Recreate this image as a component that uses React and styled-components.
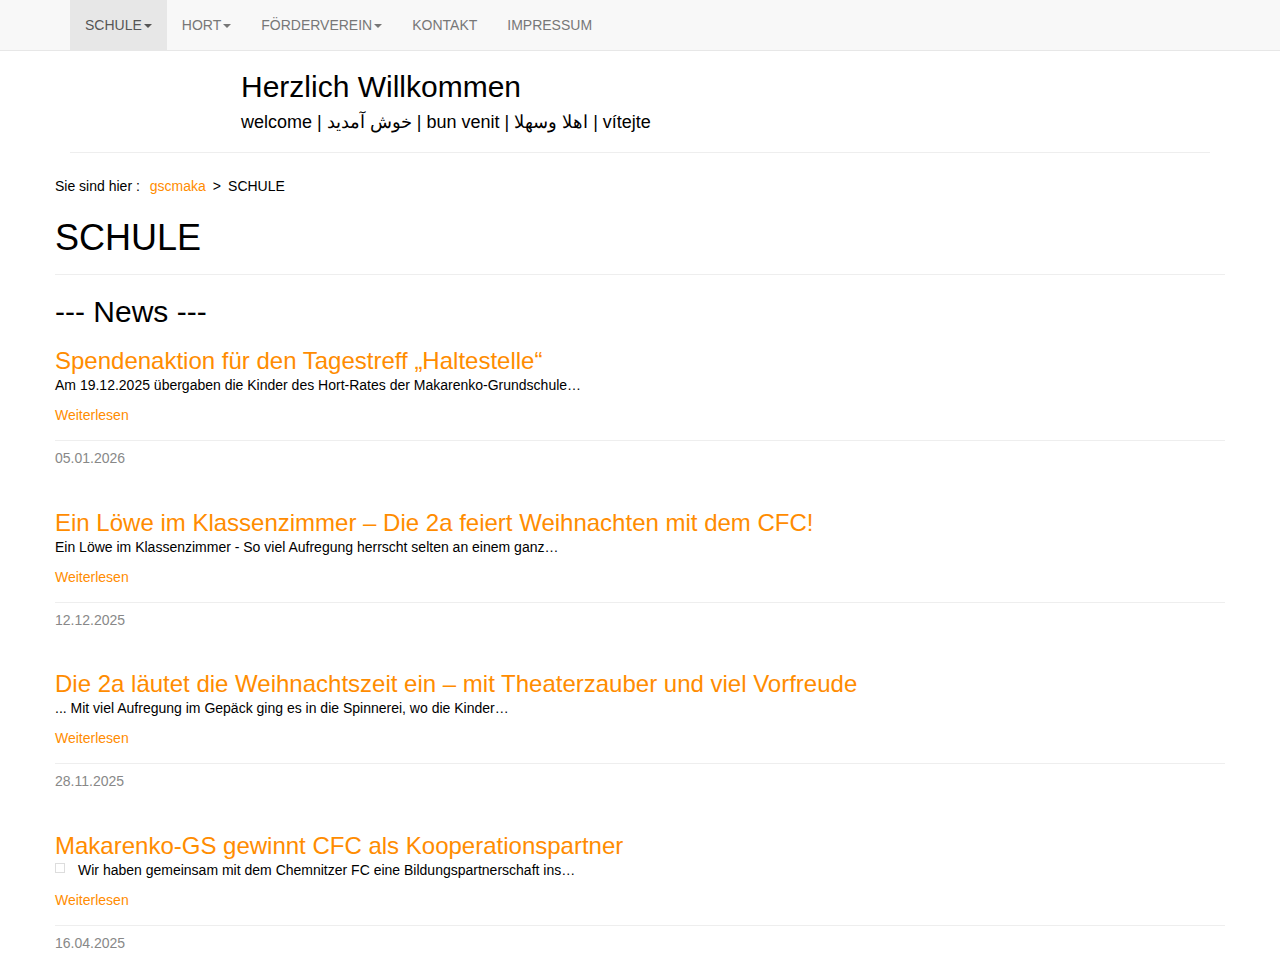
import React from "react";
import styled, { createGlobalStyle } from "styled-components";

const GlobalStyle = createGlobalStyle`
    body {
        margin: 0;
        font-family: "Liberation Sans", Arial, sans-serif;
        font-size: 14px;
        line-height: 20px;
        color: #111;
        background: #fff;
    }
`;

const navItems = [
    { label: "SCHULE", caret: true, active: true },
    { label: "HORT", caret: true },
    { label: "FÖRDERVEREIN", caret: true },
    { label: "KONTAKT" },
    { label: "IMPRESSUM" },
];

const news = [
    {
        title: "Spendenaktion für den Tagestreff „Haltestelle“",
        teaser: "Am 19.12.2025 übergaben die Kinder des Hort-Rates der Makarenko-Grundschule…",
        date: "05.01.2026",
    },
    {
        title: "Ein Löwe im Klassenzimmer – Die 2a feiert Weihnachten mit dem CFC!",
        teaser: "Ein Löwe im Klassenzimmer - So viel Aufregung herrscht selten an einem ganz…",
        date: "12.12.2025",
    },
    {
        title: "Die 2a läutet die Weihnachtszeit ein – mit Theaterzauber und viel Vorfreude",
        teaser: "... Mit viel Aufregung im Gepäck ging es in die Spinnerei, wo die Kinder…",
        date: "28.11.2025",
    },
    {
        title: "Makarenko-GS gewinnt CFC als Kooperationspartner",
        teaser: "Wir haben gemeinsam mit dem Chemnitzer FC eine Bildungspartnerschaft ins…",
        date: "16.04.2025",
        brokenImage: true,
    },
];

export default function App() {
    return (
        <>
            <GlobalStyle />
            <Navbar>
                <NavContainer>
                    <NavList>
                        {navItems.map((item) => (
                            <NavItem key={item.label} $active={item.active}>
                                {item.label}
                                {item.caret && <Caret />}
                            </NavItem>
                        ))}
                    </NavList>
                </NavContainer>
            </Navbar>

            <Container>
                <Header>
                    <Welcome>Herzlich Willkommen</Welcome>
                    <Languages>
                        welcome | <bdi dir="rtl">خوش آمدید</bdi> | bun venit | <bdi dir="rtl">اهلا وسهلا</bdi> | vítejte
                    </Languages>
                </Header>
            </Container>

            <Main>
                <Breadcrumb>
                    <span>Sie sind hier :</span>
                    <Link>gscmaka</Link>
                    <span>&gt;</span>
                    <span>SCHULE</span>
                </Breadcrumb>
                <PageTitle>SCHULE</PageTitle>
                <Rule />
                <SectionTitle>--- News ---</SectionTitle>

                {news.map((n) => (
                    <Article key={n.title}>
                        <ArticleTitle>{n.title}</ArticleTitle>
                        <Teaser>
                            {n.brokenImage && <BrokenImg />}
                            {n.teaser}
                        </Teaser>
                        <ReadMore>Weiterlesen</ReadMore>
                        <ArticleRule />
                        <DateLine>{n.date}</DateLine>
                    </Article>
                ))}
            </Main>
        </>
    );
}

const Navbar = styled.nav`
    background: #f8f8f8;
    border-bottom: 1px solid #e7e7e7;
    height: 50px;
`;

const NavContainer = styled.div`
    width: 1140px;
    margin: 0 auto;
    padding: 0 15px;
`;

const NavList = styled.ul`
    display: flex;
    margin: 0;
    padding: 0;
    list-style: none;
`;

const NavItem = styled.li`
    display: flex;
    align-items: center;
    height: 50px;
    padding: 0 15px;
    font-size: 14px;
    color: ${(p) => (p.$active ? "#555" : "#777")};
    background: ${(p) => (p.$active ? "#e7e7e7" : "transparent")};
`;

const Caret = styled.span`
    display: inline-block;
    width: 0;
    height: 0;
    margin-left: 2px;
    margin-top: 1px;
    border-top: 4px solid currentColor;
    border-left: 4px solid transparent;
    border-right: 4px solid transparent;
`;

const Container = styled.div`
    width: 1140px;
    margin: 0 auto;
    padding: 0 15px;
`;

const Header = styled.header`
    padding: 19px 0 17px 171px;
    border-bottom: 1px solid #eee;
`;

const Welcome = styled.h1`
    margin: 0;
    font-size: 30px;
    font-weight: 400;
    line-height: 33px;
    color: #000;
`;

const Languages = styled.div`
    margin-top: 6px;
    font-size: 18px;
    line-height: 26px;
    color: #000;
`;

const Main = styled.main`
    width: 1170px;
    margin: 0 auto;
    padding-top: 23px;
`;

const Breadcrumb = styled.div`
    display: flex;
    gap: 7px;
    color: #000;
    span:first-child {
        margin-right: 3px;
    }
`;

const Link = styled.a`
    color: #ff8c00;
    cursor: pointer;
`;

const PageTitle = styled.h1`
    margin: 22px 0 16px;
    font-size: 36px;
    font-weight: 400;
    line-height: 40px;
    color: #000;
`;

const Rule = styled.hr`
    margin: 0;
    border: 0;
    border-top: 1px solid #eee;
`;

const SectionTitle = styled.h2`
    margin: 20px 0 0;
    font-size: 30px;
    font-weight: 400;
    line-height: 33px;
    color: #000;
`;

const Article = styled.article`
    padding-top: 20px;
    padding-bottom: 21.6px;
`;

const ArticleTitle = styled.h3`
    margin: 0;
    font-size: 24px;
    font-weight: 400;
    line-height: 1.1;
    color: #ff8c00;
`;

const Teaser = styled.p`
    display: flex;
    align-items: center;
    margin: 0.6px 0 10px;
    color: #000;
`;

const BrokenImg = styled.span`
    display: inline-block;
    width: 8px;
    height: 8px;
    margin: -4px 13px 0 0;
    border: 1px solid #ddd;
`;

const ReadMore = styled.a`
    display: block;
    color: #ff8c00;
    cursor: pointer;
`;

const ArticleRule = styled(Rule)`
    margin-top: 15px;
`;

const DateLine = styled.div`
    margin-top: 7px;
    color: #888;
`;
